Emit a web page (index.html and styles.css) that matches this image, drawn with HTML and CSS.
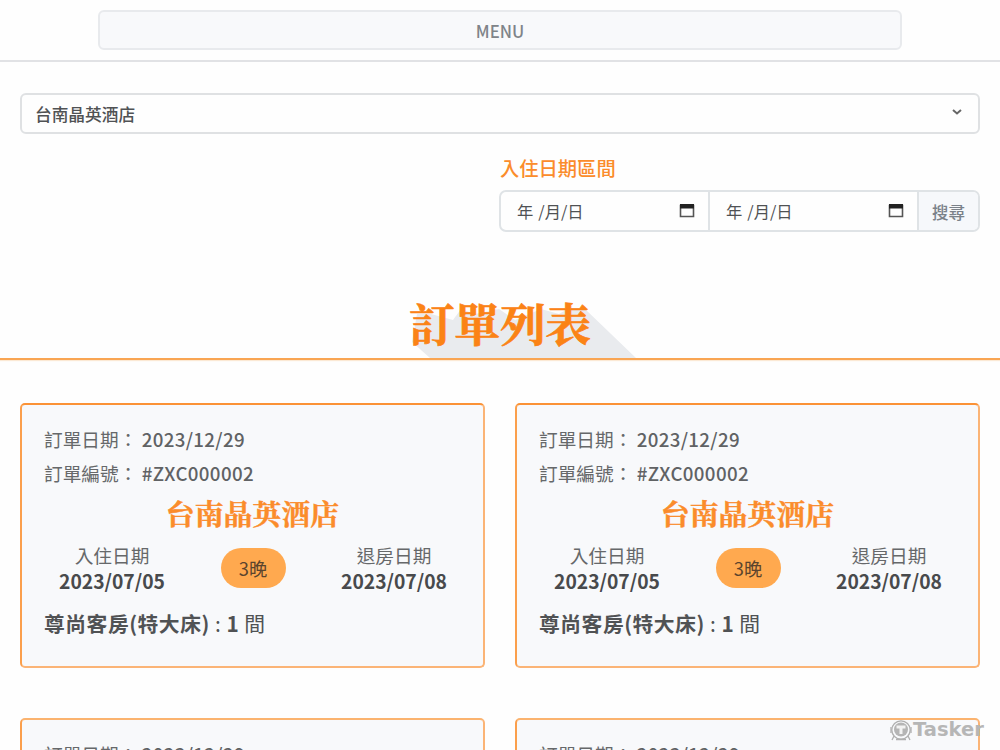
FILE: index.html
```html
<!DOCTYPE html>
<html lang="zh-Hant">
<head>
<meta charset="utf-8">
<title>訂單列表</title>
<link rel="stylesheet" href="styles.css">
</head>
<body>
<header class="topbar"><button class="menu-button" type="button">MENU</button></header>
<main>
  <section class="filters">
    <div class="hotel-select">
      <span>台南晶英酒店</span>
      <svg class="chevron" viewBox="0 0 12 8"><path d="M2 2l4 3.5L10 2" fill="none" stroke="#666" stroke-width="2"/></svg>
    </div>
    <div class="date-filter">
      <div class="date-label">入住日期區間</div>
      <div class="date-group">
        <div class="date-input"><span><i class="year">年</i>/月/日</span><svg class="calendar" viewBox="0 0 16 14"><path d="M1.5 1.5h13v11h-13z" fill="none" stroke="#555" stroke-width="1.6"/><path d="M1 0h14v4.5H1z" fill="#222"/></svg></div>
        <div class="date-input"><span><i class="year">年</i>/月/日</span><svg class="calendar" viewBox="0 0 16 14"><path d="M1.5 1.5h13v11h-13z" fill="none" stroke="#555" stroke-width="1.6"/><path d="M1 0h14v4.5H1z" fill="#222"/></svg></div>
        <button class="search-button" type="button">搜尋</button>
      </div>
    </div>
  </section>
  <div class="title-bar">
    <svg class="title-shadow" viewBox="0 0 225 52"><path d="M1 36L6 8H20L42 14L50 3L64 8L88 3L104 14L130 3L148 8L158 2H173L225 52H19z" fill="#e9ebee"/></svg>
    <h1 class="page-title">訂單列表</h1>
  </div>
  <section class="orders">
    <article class="order-card">
      <p class="meta">訂單日期： <b>2023/12/29</b></p>
      <p class="meta">訂單編號： <b>#ZXC000002</b></p>
      <h2 class="hotel-name">台南晶英酒店</h2>
      <div class="stay">
        <div class="stay-date"><span>入住日期</span><b>2023/07/05</b></div>
        <span class="nights">3晚</span>
        <div class="stay-date"><span>退房日期</span><b>2023/07/08</b></div>
      </div>
      <p class="room"><b>尊尚客房(特大床)</b> : <b>1</b> 間</p>
    </article>
    <article class="order-card">
      <p class="meta">訂單日期： <b>2023/12/29</b></p>
      <p class="meta">訂單編號： <b>#ZXC000002</b></p>
      <h2 class="hotel-name">台南晶英酒店</h2>
      <div class="stay">
        <div class="stay-date"><span>入住日期</span><b>2023/07/05</b></div>
        <span class="nights">3晚</span>
        <div class="stay-date"><span>退房日期</span><b>2023/07/08</b></div>
      </div>
      <p class="room"><b>尊尚客房(特大床)</b> : <b>1</b> 間</p>
    </article>
    <article class="order-card"><p class="meta">訂單日期： <b>2023/12/29</b></p></article>
    <article class="order-card"><p class="meta">訂單日期： <b>2023/12/29</b></p></article>
  </section>
</main>
<div class="watermark">
  <svg class="watermark-logo" viewBox="0 0 22 22"><g fill="none" stroke="#b0b0b0" stroke-width="1.3"><circle cx="11" cy="11" r="9.2"/><path d="M1 8v6M21 8v6M4 17l-2 4M18 17l2 4M6 20.5h10"/></g><circle cx="11" cy="10.5" r="7" fill="#b5b5b5"/><path d="M6.5 6.5h9v3h-3V15h-3V9.500h-3z" fill="#f3f3f3"/></svg>
  <span>Tasker</span>
</div>
</body>
</html>
```
FILE: styles.css
```css
* { box-sizing: border-box; }
body {
  margin: 0;
  height: 750px;
  overflow: hidden;
  position: relative;
  background: #fefefe;
  color: #505254;
  font-family: "Noto Sans CJK TC", sans-serif;
}
main { height: 688px; overflow: hidden; }
p, h1, h2 { margin: 0; }
.topbar {
  height: 62px;
  padding-top: 10px;
  border-bottom: 2px solid #e1e2e5;
  display: flex;
  justify-content: center;
  align-items: flex-start;
}
.menu-button {
  width: 804px;
  height: 40px;
  padding: 2px 0 0;
  border: 2px solid #e8eaed;
  border-radius: 6px;
  background: #f8f9fb;
  color: #7f8489;
  font: 500 16.7px/20px "Noto Sans CJK TC", sans-serif;
}
.filters { padding: 31px 20px 0; height: 238px; }
.hotel-select {
  height: 41px;
  padding: 0 15px 0 13px;
  border: 2px solid #dfe1e3;
  border-radius: 6px;
  display: flex;
  align-items: center;
  justify-content: space-between;
  font-size: 16.7px;
  font-weight: 500;
}
.chevron { width: 12px; height: 8px; margin-top: -3px; }
.date-filter { width: 481px; margin: 21px 0 0 auto; }
.date-label {
  height: 35px;
  padding-left: 1px;
  color: #fb8c2b;
  font-size: 19.3px;
  font-weight: 500;
  line-height: 26px;
}
.date-group {
  height: 42px;
  border: 2px solid #dfe3e6;
  border-radius: 7px;
  display: flex;
  overflow: hidden;
}
.date-input {
  width: 209px;
  padding: 0 13px 0 16px;
  border-right: 2px solid #dfe3e6;
  display: flex;
  align-items: center;
  justify-content: space-between;
  font-size: 16.3px;
}
.year { font-style: normal; margin-right: 5px; }
.calendar { width: 16px; height: 14px; margin-top: 0; }
.search-button {
  flex: 1;
  padding: 2px 0 0;
  border: 0;
  background: #f6f8fb;
  color: #7b828a;
  font: 500 16.5px/20px "Noto Sans CJK TC", sans-serif;
}
.title-bar {
  position: relative;
  height: 60px;
  border-bottom: 2px solid #f9a553;
  box-shadow: 0 1px 1px #fbe9d5;
}
.title-shadow { position: absolute; left: 411px; top: 6px; width: 225px; height: 52px; }
.page-title {
  position: relative;
  text-align: center;
  color: #fb8316;
  font: 700 45.5px/45px "Noto Serif CJK TC", "Noto Serif TC", "Noto Sans CJK TC", serif;
  -webkit-text-stroke: 0.7px #fb8316;
}
.orders {
  padding: 43px 20px 0;
  display: grid;
  grid-template-columns: 1fr 1fr;
  gap: 50px 30px;
}
.order-card {
  height: 265px;
  padding: 17px 22px 0;
  border: 2px solid #fbb476;
  border-top-color: #fb9236;
  border-left-color: #fb9f4c;
  border-radius: 5px;
  background: #f8f9fb;
}
.order-card:nth-child(n + 3) { border-top-color: #fbb36f; }
.meta { font-size: 18.7px; line-height: 33.5px; color: #66686a; }
.meta b { font-weight: 500; color: #606264; letter-spacing: 0.36px; }
.hotel-name {
  height: 52px;
  text-align: center;
  color: #fb8c2b;
  font: 700 28.9px/48px "Noto Serif CJK TC", "Noto Serif TC", "Noto Sans CJK TC", serif;
  -webkit-text-stroke: 0.4px #fb8c2b;
}
.stay {
  display: flex;
  align-items: center;
  justify-content: space-between;
  height: 54px;
  padding: 0 12px 0 13px;
}
.stay-date {
  width: 110px;
  display: flex;
  flex-direction: column;
  align-items: center;
  font-size: 18.7px;
  line-height: 26px;
  color: #66686a;
}
.stay-date b { font-size: 19.3px; color: #484a4c; }
.nights {
  width: 65px;
  height: 40px;
  border-radius: 20px;
  background: #ffa94f;
  color: #5b442d;
  text-align: center;
  font-size: 18.3px;
  line-height: 41px;
}
.room { margin-top: 8px; font-size: 20.8px; line-height: 40px; letter-spacing: 0.5px; }
.watermark {
  position: absolute;
  left: 890px;
  top: 717px;
  display: flex;
  align-items: center;
  gap: 1px;
  color: #b6b6b6;
  font: 700 19.5px/25px "DejaVu Sans", sans-serif;
}
.watermark-logo { width: 22px; height: 22px; }
```
